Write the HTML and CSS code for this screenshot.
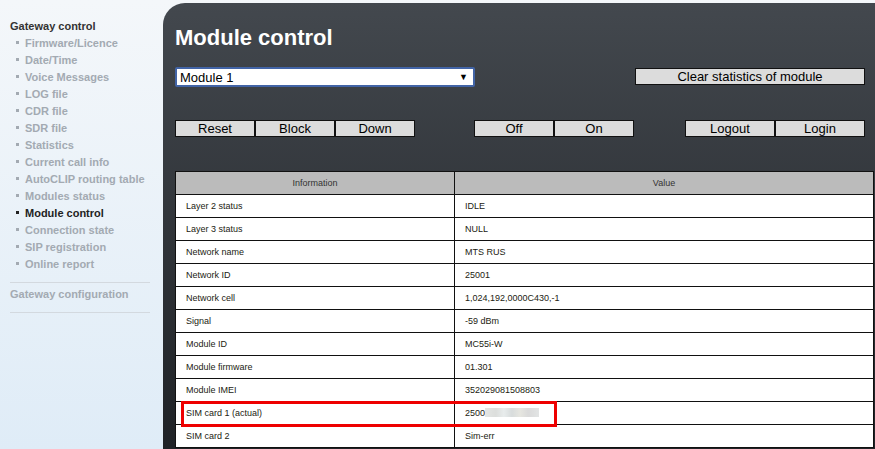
FILE: index.html
```html
<!DOCTYPE html>
<html lang="en">
<head>
    <meta charset="UTF-8">
    <title>Module control</title>
    <link rel="stylesheet" href="styles.css">
</head>
<body>
    <div class="page">
        <div class="sidebar">
            <div class="menu-title">Gateway control</div>
            <ul class="menu">
                <li>Firmware/Licence</li>
                <li>Date/Time</li>
                <li>Voice Messages</li>
                <li>LOG file</li>
                <li>CDR file</li>
                <li>SDR file</li>
                <li>Statistics</li>
                <li>Current call info</li>
                <li>AutoCLIP routing table</li>
                <li>Modules status</li>
                <li class="active">Module control</li>
                <li>Connection state</li>
                <li>SIP registration</li>
                <li>Online report</li>
            </ul>
            <div class="menu-section">Gateway configuration</div>
        </div>

        <div class="main">
            <h1>Module control</h1>
            <div class="controls">
                <div class="row top-row">
                    <div class="select-wrap">
                        <select class="module-select">
                            <option>Module 1</option>
                            <option>Module 2</option>
                        </select>
                        <span class="arrow">&#9660;</span>
                    </div>
                    <button class="btn btn-clear">Clear statistics of module</button>
                </div>
                <div class="row btn-row">
                    <div class="group">
                        <button class="btn">Reset</button>
                        <button class="btn">Block</button>
                        <button class="btn">Down</button>
                    </div>
                    <div class="group group-power">
                        <button class="btn">Off</button>
                        <button class="btn">On</button>
                    </div>
                    <div class="group group-auth">
                        <button class="btn">Logout</button>
                        <button class="btn">Login</button>
                    </div>
                </div>
            </div>

            <div class="table-wrap">
                <table class="info">
                    <tr><th class="col-name">Information</th><th>Value</th></tr>
                    <tr><td>Layer 2 status</td><td>IDLE</td></tr>
                    <tr><td>Layer 3 status</td><td>NULL</td></tr>
                    <tr><td>Network name</td><td>MTS RUS</td></tr>
                    <tr><td>Network ID</td><td>25001</td></tr>
                    <tr><td>Network cell</td><td>1,024,192,0000C430,-1</td></tr>
                    <tr><td>Signal</td><td>-59 dBm</td></tr>
                    <tr><td>Module ID</td><td>MC55i-W</td></tr>
                    <tr><td>Module firmware</td><td>01.301</td></tr>
                    <tr><td>Module IMEI</td><td>352029081508803</td></tr>
                    <tr><td>SIM card 1 (actual)</td><td>2500<span class="blur"></span></td></tr>
                    <tr><td>SIM card 2</td><td>Sim-err</td></tr>
                </table>
                <div class="highlight"></div>
            </div>
        </div>
    </div>
</body>
</html>
```

FILE: styles.css
```css
html, body {
    margin: 0;
    padding: 0;
    height: 100%;
}
body {
    font-family: "Liberation Sans", Arial, sans-serif;
    background: linear-gradient(#f4f7fa, #dfecf7);
    overflow: hidden;
}
.page {
    display: flex;
    min-height: 100%;
}
.sidebar {
    width: 163px;
    flex-shrink: 0;
    padding: 18px 13px 0 10px;
    box-sizing: border-box;
    font-size: 11px;
    font-weight: bold;
    line-height: 17px;
}
.menu-title {
    color: #333;
}
.menu {
    list-style: none;
    margin: 0;
    padding: 0 0 9px 0;
    border-bottom: 1px solid #d3d9df;
}
.menu li {
    color: #a3aab2;
    padding-left: 6px;
}
.menu li::before {
    content: "";
    display: inline-block;
    width: 3px;
    height: 3px;
    margin-right: 6px;
    vertical-align: 3px;
    background-color: #a3aab2;
}
.menu li.active {
    color: #222;
}
.menu li.active::before {
    background-color: #222;
}
.menu-section {
    color: #a3aab2;
    padding: 3px 0 9px 0;
    border-bottom: 1px solid #d3d9df;
}
.main {
    flex: 1;
    margin-top: 3px;
    padding-left: 12px;
    border-top-left-radius: 22px;
    background: linear-gradient(#43484e, #1f2226);
}
h1 {
    margin: 22px 0 0 0;
    font-size: 22px;
    line-height: 25px;
    color: white;
}
.controls {
    width: 690px;
    margin-top: 17px;
}
.row {
    display: flex;
    align-items: flex-start;
}
.top-row {
    justify-content: space-between;
}
.btn-row {
    margin-top: 33px;
}
.select-wrap {
    position: relative;
}
.module-select {
    display: block;
    width: 300px;
    height: 20px;
    padding: 0 0 0 3px;
    border: 2px solid #4264a6;
    border-radius: 2px;
    background-color: white;
    color: #000;
    font-family: "Liberation Sans", Arial, sans-serif;
    font-size: 13px;
    -webkit-appearance: none;
    appearance: none;
    outline: none;
}
.arrow {
    position: absolute;
    right: 7px;
    top: 5px;
    font-size: 9px;
    line-height: 10px;
    color: #000;
    pointer-events: none;
}
.btn {
    height: 17px;
    width: 80px;
    padding: 0;
    margin: 0;
    border: 1px solid #111;
    background-color: #dcdcdc;
    color: #000;
    font-family: "Liberation Sans", Arial, sans-serif;
    font-size: 13px;
    line-height: 15px;
}
.btn-clear {
    width: 230px;
    margin-top: 1px;
}
.group {
    display: flex;
}
.group-power {
    margin-left: 59px;
}
.group-auth {
    margin-left: auto;
}
.group-auth .btn {
    width: 90px;
}
.table-wrap {
    position: relative;
    margin-top: 34px;
    width: 699px;
}
.info {
    width: 699px;
    border-collapse: collapse;
    background-color: white;
    font-size: 9px;
    color: #221;
}
.info th {
    height: 22px;
    padding: 0;
    border: 1px solid #111;
    background-color: #bbbbbb;
    font-weight: normal;
    color: #333;
}
.info th.col-name {
    width: 278px;
}
.info td {
    height: 22px;
    padding: 0 0 0 10px;
    border: 1px solid #111;
}
.blur {
    display: inline-block;
    width: 54px;
    height: 9px;
    vertical-align: -1px;
    background: linear-gradient(90deg, #e4e6e4 0, #dcdedc 20%, #e8ecec 35%, #d8dcdc 50%, #e6e6e0 65%, #dadada 80%, #e2e4e4 100%);
    filter: blur(0.6px);
}
.highlight {
    position: absolute;
    left: 6px;
    top: 230px;
    width: 376px;
    height: 26px;
    border: 3px solid #ee0000;
    box-sizing: border-box;
}
```
